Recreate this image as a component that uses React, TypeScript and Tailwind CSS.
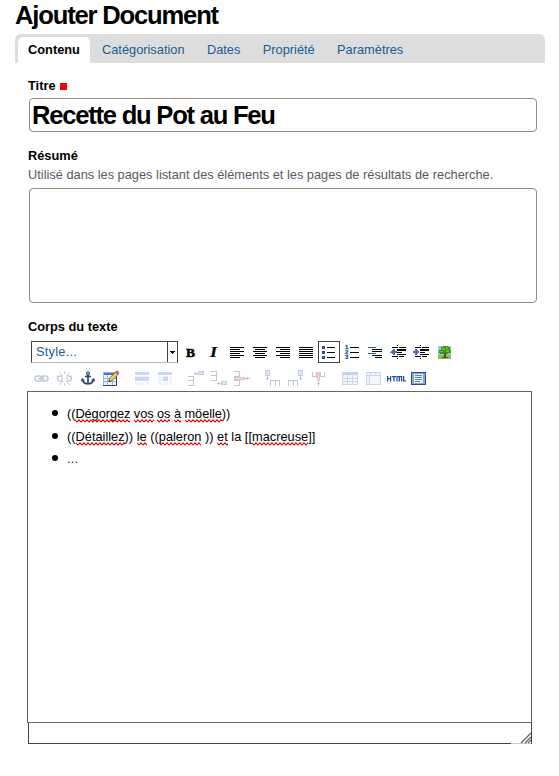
import type { ReactNode } from 'react';

const tabs = ['Catégorisation', 'Dates', 'Propriété', 'Paramètres'];

function Btn({ children, active = false, faded = false }: { children: ReactNode; active?: boolean; faded?: boolean }) {
  return (
    <button className={`flex h-[22px] w-[23px] shrink-0 ${faded ? 'opacity-35' : ''}`}>
      <svg width="23" height="22" viewBox="0 0 23 22" shapeRendering="crispEdges" fill="none">
        {active && <rect x="1.5" y=".5" width="21" height="21" stroke="#444" fill="#fff" />}
        {children}
      </svg>
    </button>
  );
}

/* Each entry is x, y, width; every line is one pixel tall. */
function Lines({ rows, color = '#000' }: { rows: number[][]; color?: string }) {
  return <>{rows.map(([x, y, w], i) => <rect key={i} x={x} y={y} width={w} height="1" fill={color} />)}</>;
}

const wave = 'M0 .8' + Array.from({ length: 30 }, () => 'l2 2.2l2 -2.2').join('');

function Misspelt({ children }: { children: ReactNode }) {
  return (
    <span className="relative inline-block">
      {children}
      <svg className="absolute bottom-[-1px] left-0 h-[4px] w-full overflow-hidden">
        <path d={wave} fill="none" stroke="#e00000" strokeWidth="1.1" />
      </svg>
    </span>
  );
}

function Grid() {
  return (
    <>
      <path d="M5 4h15v13H5z" fill="#dce8fb" stroke="none" />
      <path d="M4 4h16v3H4z" fill="#5f82c8" />
      <path d="M4.5 4.5h15v12h-15zM4 10.5h16M4 13.5h16M9.5 7v10M14.5 7v10" stroke="#6b8ac4" />
    </>
  );
}

function Box({ x, y, w = 6, h = 4 }: { x: number; y: number; w?: number; h?: number }) {
  return <rect x={x + 0.5} y={y + 0.5} width={w - 1} height={h - 1} fill="#9dbcff" stroke="#4e6eb5" />;
}

export default function App() {
  return (
    <main className="h-[776px] w-[559px] overflow-hidden bg-white pl-[15px] font-['Liberation_Sans',Arial,sans-serif] text-[12.8px] leading-[16px] text-black">
      <h1 className="h-[34px] whitespace-nowrap pt-[1px] text-[25.6px] font-bold leading-[29px] tracking-[-1.18px]">Ajouter Document</h1>
      <nav className="flex h-[29px] w-[530px] rounded-t-[6px] bg-[#ddd] pl-[3px] pt-[3px] text-[#205c90]">
        <a className="w-[72px] rounded-t-[5px] bg-white pl-[10px] pt-[5px] font-bold text-black">Contenu</a>
        <div className="flex gap-[22.4px] pl-[12px] pt-[5px]">
          {tabs.map((t) => <a key={t}>{t}</a>)}
        </div>
      </nav>

      <section className="pl-[13px]">
        <div className="flex h-[35px] items-center gap-[4px] pt-[11px] font-bold">
          Titre <span className="mt-[1px] h-[7px] w-[7px] bg-[#f00]" />
        </div>
        <div className="ml-[1px] h-[34px] w-[508px] rounded-[4px] border border-[#998c7c] pl-[2px] text-[25.6px] font-bold leading-[33px] tracking-[-1.24px] whitespace-nowrap">
          Recette du Pot au Feu
        </div>
        <div className="mt-[16px] font-bold">Résumé</div>
        <p className="mt-[3px] text-[#595959]">Utilisé dans les pages listant des éléments et les pages de résultats de recherche.</p>
        <div className="ml-[1px] mt-[5px] h-[115px] w-[508px] rounded-[4px] border border-[#998c7c]" />
        <div className="mt-[16px] font-bold">Corps du texte</div>

        <div className="mt-[6px] flex h-[22px] pl-[3px]">
          <div className="flex h-[22px] w-[147px] border border-b-[#bbb] border-l-[#444] border-r-[#444] border-t-[#444]">
            <span className="w-[136px] border-r border-[#444] pl-[4px] pt-[2px] leading-[16px] tracking-[.25px] text-[#205c90]">Style...</span>
            <svg width="9" height="20" shapeRendering="crispEdges"><path d="M2 9h5v1H2zM3 10h3v1H3zM4 11h1v1H4z" /></svg>
          </div>
          <div className="ml-[1px] flex">
            <Btn><text x="7" y="16" textLength="9" lengthAdjust="spacingAndGlyphs" fontFamily="Liberation Serif" fontWeight="900" fontSize="13.5" fill="#000" stroke="#000" strokeWidth=".5">B</text></Btn>
            <Btn><text x="8" y="16" textLength="7" lengthAdjust="spacingAndGlyphs" fontFamily="Liberation Serif" fontWeight="900" fontStyle="italic" fontSize="14" fill="#000" stroke="#000" strokeWidth=".2">I</text></Btn>
            <Btn><Lines rows={[[5, 6, 14], [5, 8, 10], [5, 10, 14], [5, 12, 10], [5, 14, 14], [5, 16, 10]]} /></Btn>
            <Btn><Lines rows={[[5, 6, 14], [7, 8, 10], [5, 10, 14], [7, 12, 10], [5, 14, 14], [7, 16, 10]]} /></Btn>
            <Btn><Lines rows={[[5, 6, 14], [9, 8, 10], [5, 10, 14], [9, 12, 10], [5, 14, 14], [9, 16, 10]]} /></Btn>
            <Btn><Lines rows={[[5, 6, 14], [5, 8, 14], [5, 10, 14], [5, 12, 14], [5, 14, 14], [5, 16, 14]]} /></Btn>
            <Btn active>
              <Lines rows={[[10, 6, 8], [10, 11, 8], [10, 16, 8]]} />
              <path d="M5 5h3v3H5zM5 10h3v3H5zM5 15h3v3H5z" fill="#26477f" />
              <path d="M6 6h1v1H6zM6 11h1v1H6zM6 16h1v1H6z" fill="#4a7bc8" />
            </Btn>
            <Btn>
              <Lines rows={[[10, 6, 9], [10, 11, 9], [10, 16, 9]]} />
              <g shapeRendering="auto" fill="#2c5cac" stroke="#2c5cac" strokeWidth=".3" fontFamily="Liberation Sans" fontWeight="700" fontSize="6">
                <text x="5" y="8">1</text><text x="5" y="13">2</text><text x="5" y="18">3</text>
              </g>
            </Btn>
            <Btn>
              <Lines rows={[[9, 8, 10], [9, 10, 10], [9, 14, 10], [12, 16, 7]]} />
              <Lines rows={[[5, 6, 8], [5, 12, 8]]} color="#205c90" />
            </Btn>
            <Btn>
              <Lines rows={[[11, 4, 1], [6, 6, 6], [13, 6, 7], [11, 8, 9], [11, 9, 9], [11, 11, 5], [11, 13, 9], [6, 15, 6], [13, 15, 5], [11, 17, 1]]} />
              <path d="M4 11h1v-1h1V9h1V8h2v2h2v2H9v2H7v-1H6v-1H4z" fill="#4770c4" />
            </Btn>
            <Btn>
              <Lines rows={[[11, 4, 1], [6, 6, 6], [13, 6, 7], [11, 8, 9], [11, 9, 9], [11, 11, 5], [11, 13, 9], [6, 15, 6], [13, 15, 5], [11, 17, 1]]} />
              <path d="M4 10h2V8h2v1h1v1h1v2H9v1H8v1H6v-2H4z" fill="#4770c4" />
            </Btn>
            <Btn>
              <path d="M6 5h13v13H6z" fill="#8acbed" /><path d="M6 14h13v4H6z" fill="#82c34c" />
              <path d="M12 12h2v4h2v1h-6v-1h2z" fill="#75420d" />
              <path d="M9 6h2V5h5v1h2v3h1v3h-3v1h-2v-1h-2v1H8v-1H7V9h2z" fill="#3d9423" />
              <path d="M10 7h3v2h-3zM14 6h2v2h-2zM8 10h3v1H8zM14 9h3v2h-3z" fill="#75bd24" />
            </Btn>
          </div>
        </div>

        <div className="mt-[5px] flex h-[24px] gap-[8px] pl-[2px]">
          <div className="flex">
            <Btn faded><g shapeRendering="auto" stroke="#536d99" strokeWidth="1.6"><rect x="5" y="8" width="7" height="5" rx="2.5" /><rect x="11" y="8" width="7" height="5" rx="2.5" /><path d="M8 10.5h7" /></g></Btn>
            <Btn faded><g shapeRendering="auto" stroke="#536d99" strokeWidth="1.6"><path d="M10 8H7a2.5 2.5 0 0 0 0 5h3M13 8h3a2.5 2.5 0 0 1 0 5h-3M8 10.5h2M13 10.5h2" /><path strokeWidth="1" d="M11.5 3v3M6 4l3 3M17 4l-3 3M11.5 18v-3M6 17l3-3M17 17l-3-3" /></g></Btn>
            <Btn><g shapeRendering="auto" transform="translate(.5 0)" stroke="#27466f" strokeWidth="1.6"><circle cx="11.5" cy="5.5" r="1.4" strokeWidth="1.2" /><path d="M11.5 7v9M8.5 8.5h6M6 11.5c.5 3 2.5 4.3 5.5 4.3s5-1.3 5.5-4.3" /><path d="M4.5 13l1.2-3 2.3 2.4zM18.5 13l-1.2-3-2.3 2.4z" fill="#27466f" strokeWidth=".4" /></g></Btn>
            <Btn>
              <path d="M4 4h14v14H4z" fill="#edf4ff" /><path d="M4 4h14v3H4z" fill="#4b71b8" />
              <path d="M4.5 4.5h13v13h-13zM4 10.5h14M4 13.5h14M8.5 7v11M13.5 7v11" stroke="#9db7e4" />
              <path d="M4 17h14v1H4zM17 8h1v10h-1z" fill="#294676" />
              <g shapeRendering="auto"><path d="M9.8 13.5l1-3.5L17 3.5l2.6 2.4-6.3 6.6z" fill="#f4ce62" stroke="#705422" strokeWidth=".8" /><path d="M16 4.5L18 2.3l2.4 2.3-2 2.2z" fill="#ce6054" /><path d="M9.5 14l.6-2 1.4 1.4z" fill="#222" /></g>
            </Btn>
          </div>
          <div className="flex">
            <Btn faded><path d="M5 4h14v13H5z" fill="#c9dcff" /><path d="M5 4h14v3H5zM5 9h14v4H5z" fill="#6790df" /><path d="M5 7.5h14M5 13.5h14M9.5 13v4M14.5 13v4" stroke="#fff" /></Btn>
            <Btn faded><path d="M5 4h14v13H5z" fill="#c9dcff" /><path d="M5 4h14v3H5zM10 9h5v4h-5z" fill="#6790df" /><path d="M5 7.5h14M5 13.5h14M9.5 7v10M15.5 7v10" stroke="#fff" /></Btn>
          </div>
          <div className="flex">
            <Btn faded><Box x={14} y={3} /><path d="M10 5.5h4M11.5 4v3M4 8.5h5.5v9H4M4 12.5h5.5" stroke="#555c77" /></Btn>
            <Btn faded><Box x={14} y={13} /><path d="M10 15.5h4M11.5 14v3M4 3.5h5.5v9H4M4 7.5h5.5" stroke="#555c77" /></Btn>
            <Btn faded><path d="M4 3.5h5.5v5H4M4 12.5h5.5v5H4M15 10.5h5M17.5 9v3" stroke="#555c77" /><path d="M4.5 9.5h10v2h-10z" fill="#f99" stroke="#d45252" /></Btn>
          </div>
          <div className="flex">
            <Btn faded><Box x={4} y={2} w={5} h={6} /><path d="M6.5 8v4M5 10.5h3M9.5 18v-5.5h9V18M14.5 13v5" stroke="#555c77" /></Btn>
            <Btn faded><Box x={14} y={2} w={5} h={6} /><path d="M16.5 8v4M15 10.5h3M4.5 18v-5.5h9V18M9.5 13v5" stroke="#555c77" /></Btn>
            <Btn faded><path d="M5.5 4v4.5h4V4M13.5 4v4.5h4V4M11.5 13v5M10 15.5h3" stroke="#555c77" /><path d="M10.5 4.5h2v8h-2z" fill="#f99" stroke="#d45252" /></Btn>
          </div>
          <div className="flex">
            <Btn faded><Grid /></Btn>
            <Btn faded><path d="M5 4h15v13H5z" fill="#dce8fb" /><path d="M5 4.5h14.5v12H5zM5 7.5h15M9.5 4v3M14.5 4v3M8.5 7v10M5 13.5h3" stroke="#6b8ac4" /></Btn>
            <Btn><g shapeRendering="auto" stroke="#2d518d" strokeWidth="1.3"><path d="M3.6 8v5.5M6.6 8v5.5M3 10.7h4M8 8.6h4M10 8.6v4.9M13 13.5V8.6h4.6v4.9M15.3 8.6v4.9M19.6 8v4.9H22" /></g></Btn>
            <Btn><rect x="4.5" y="4.5" width="14" height="12" fill="#7ca7f5" stroke="#294f96" /><path d="M7 6h9v9H7z" fill="#e9f1ff" /><path d="M8 7.5h7M8 9.5h7M8 11.5h7M8 13.5h5" stroke="#6287c8" /></Btn>
          </div>
        </div>

        <div className="-ml-[1px] -mt-[1px] h-[332px] w-[505px] border border-[#666] pt-[11px]">
          <ul>
            {[
              <span className="tracking-[-.07px]">((<Misspelt>Dégorgez</Misspelt> <Misspelt>vos</Misspelt> <Misspelt>os</Misspelt> <Misspelt>à</Misspelt> <Misspelt>möelle</Misspelt>))</span>,
              <>((<Misspelt>Détaillez</Misspelt>)) <Misspelt>le</Misspelt> ((<Misspelt>paleron</Misspelt> )) <Misspelt>et</Misspelt> la [[<Misspelt>macreuse</Misspelt>]]</>,
              <span className="tracking-[.3px] text-[#401010]">...</span>,
            ].map((item, i) => (
              <li key={i} className={`flex pl-[24px] ${i === 0 ? 'h-[23px]' : 'h-[22px]'}`}>
                <span className="mr-[9px] mt-[7px] h-[6px] w-[6px] rounded-full bg-black" />
                <span className="whitespace-pre leading-[16px] pt-[3px]">{item}</span>
              </li>
            ))}
          </ul>
        </div>
        <div className="flex h-[21px] w-[504px] items-end justify-end border border-t-0 border-[#444]">
          <svg width="20" height="20" className="mb-[-1px]"><path d="M0 19.5h20" stroke="#ccc" /><path d="M10 19l10-10M14 19l6-6M17 19l3-3" stroke="#666" strokeWidth="1.3" /></svg>
        </div>
      </section>
    </main>
  );
}
